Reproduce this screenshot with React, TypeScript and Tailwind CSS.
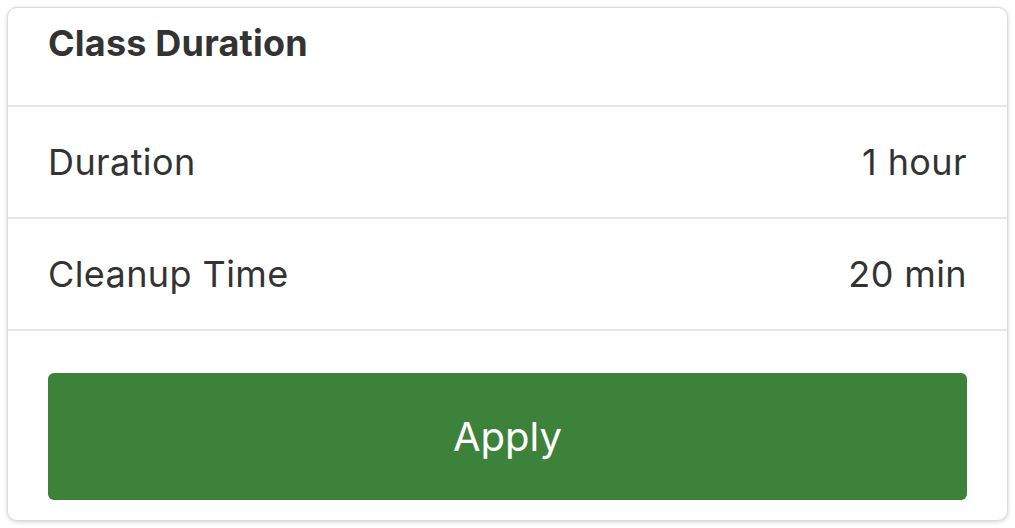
export default function App() {
  const rows = [
    { label: 'Duration', value: '1 hour' },
    { label: 'Cleanup Time', value: '20 min' },
  ];

  return (
    <div className="w-[1015px] h-[528px] bg-white p-[7px] font-['Inter',sans-serif] text-[#333333]">
      <div className="flex h-[514px] w-[1001px] flex-col rounded-[10px] border border-[#dcdcdc] bg-white shadow-[0_1px_4px_rgba(0,0,0,0.18)]">
        {/* Header */}
        <div className="h-[99px] border-b-2 border-[#e6e6e6] px-[40px] pt-[15px]">
          <h2 className="text-[36px] font-bold leading-[40px] tracking-[0.2px]">Class Duration</h2>
        </div>

        {/* Rows */}
        {rows.map((row) => (
          <div
            key={row.label}
            className="flex h-[112px] items-center justify-between border-b-2 border-[#e6e6e6] px-[40px]"
          >
            <span className="text-[36px] leading-[40px] tracking-[0.4px]">{row.label}</span>
            <span className="text-[36px] leading-[40px] tracking-[0.4px]">{row.value}</span>
          </div>
        ))}

        {/* Apply */}
        <div className="flex-1 px-[40px] pt-[42px]">
          <button className="flex h-[127px] w-full items-center justify-center rounded-[6px] bg-[#3d823a] text-[40px] text-white">
            Apply
          </button>
        </div>
      </div>
    </div>
  );
}
